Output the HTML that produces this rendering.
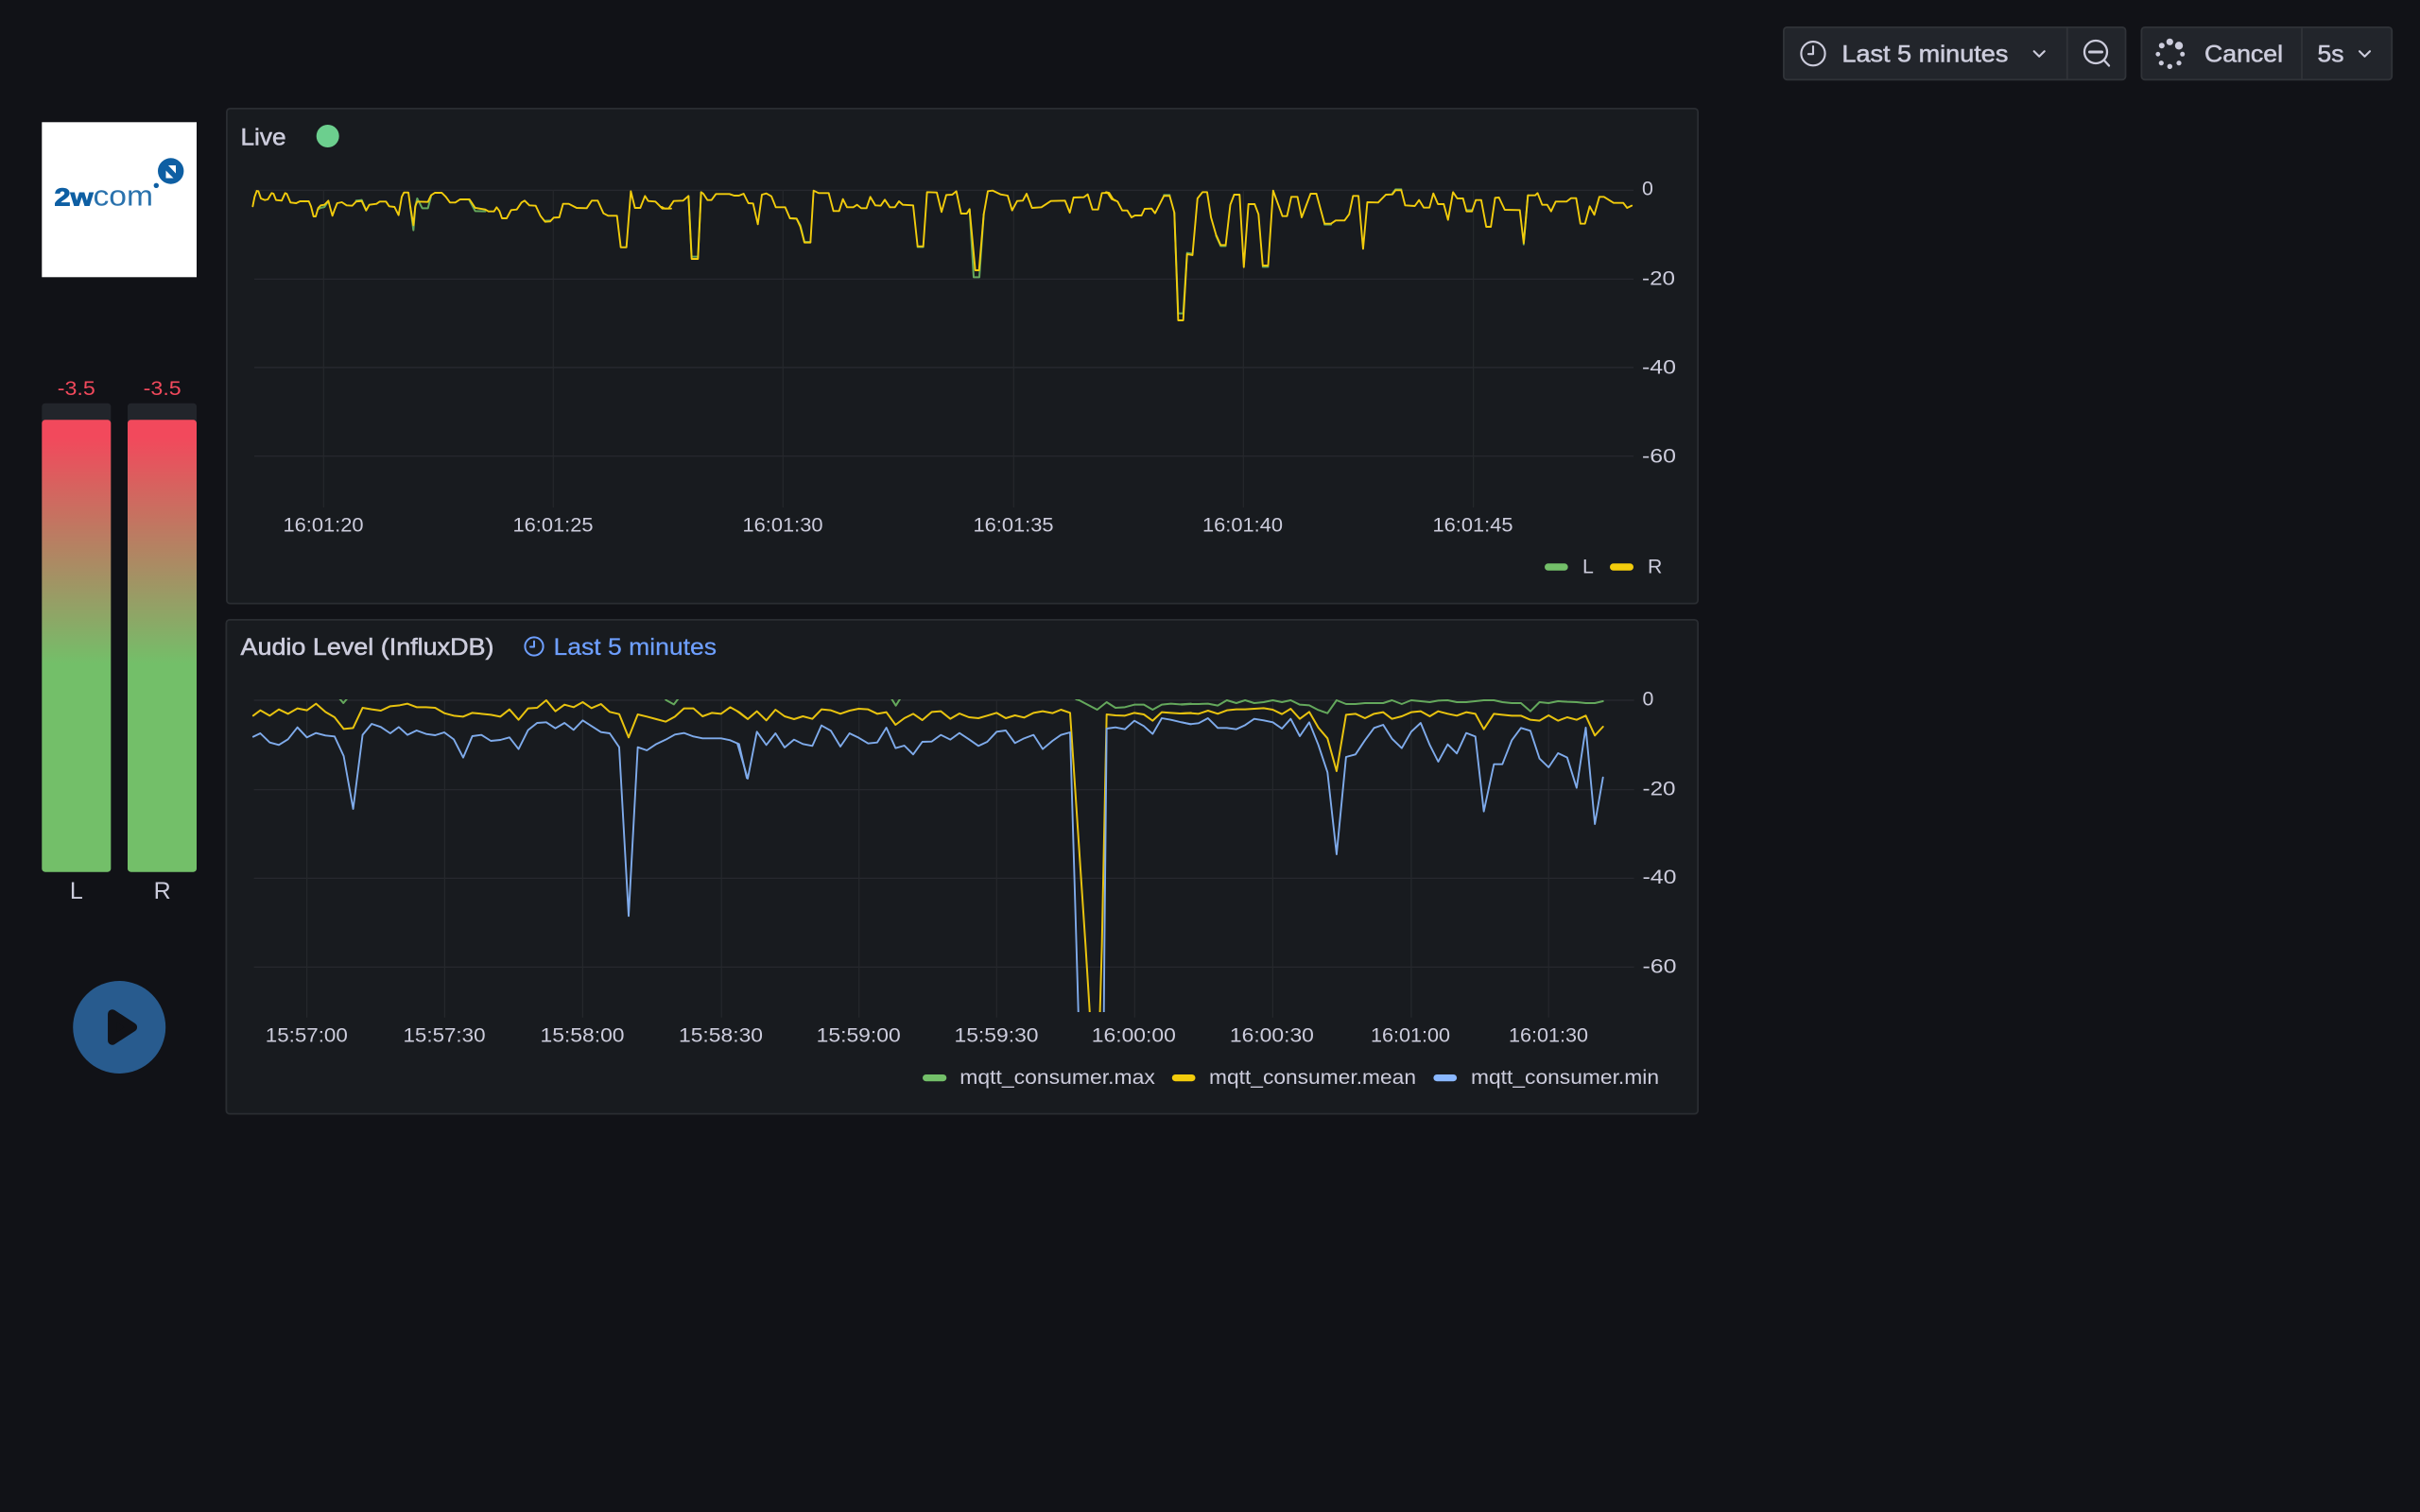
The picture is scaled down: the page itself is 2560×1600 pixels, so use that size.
<!DOCTYPE html>
<html lang="en">
<head>
<meta charset="utf-8">
<title>Audio Dashboard</title>
<style>
html,body{margin:0;padding:0;background:#111217;width:2560px;height:1600px;overflow:hidden}
svg{display:block}
text{font-family:"Liberation Sans",sans-serif;fill:#ccccdc;font-size:21.3px}
.m{font-size:25px;stroke:#ccccdc;stroke-width:.55px}
.c{text-anchor:middle}
.grid line{stroke:#25282c;stroke-width:1.2}
.grid line.h{stroke:#282b30}
polyline{fill:none;stroke-linejoin:round;stroke-linecap:round;vector-effect:non-scaling-stroke}
.g polyline{stroke:#64a85c;stroke-width:2}
.y polyline{stroke:#f2cc0c;stroke-width:1.9}
.b polyline{stroke:#7fabeb;stroke-width:1.9}
.y2 polyline{stroke:#e8c30f;stroke-width:2}
</style>
</head>
<body>
<svg xmlns="http://www.w3.org/2000/svg" width="2560" height="1600" viewBox="0 0 2560 1600">
<defs>
<linearGradient id="meter" x1="0" y1="0" x2="0" y2="1">
<stop offset="0.04" stop-color="#f2495c"/>
<stop offset="0.54" stop-color="#73bf69"/>
</linearGradient>
<clipPath id="clip2"><rect x="260" y="740" width="1480" height="331"/></clipPath>
</defs>

<!-- toolbar -->
<rect x="1886.9" y="28.9" width="361.6" height="55.4" rx="3.5" fill="#22252b" stroke="#303338" stroke-width="1.8"/>
<line x1="2186.8" y1="29" x2="2186.8" y2="84" stroke="#303338" stroke-width="1.8"/>
<rect x="2265.4" y="28.9" width="264.8" height="55.4" rx="3.5" fill="#22252b" stroke="#303338" stroke-width="1.8"/>
<line x1="2435" y1="29" x2="2435" y2="84" stroke="#303338" stroke-width="1.8"/>
<circle cx="1918" cy="56.7" r="12.6" fill="none" stroke="#ccccdc" stroke-width="2.1"/>
<path d="M1918 49v8.2h-5" fill="none" stroke="#ccccdc" stroke-width="2.1" stroke-linecap="round" stroke-linejoin="round"/>
<text class="m" x="1948.4" y="65.7" textLength="176" lengthAdjust="spacingAndGlyphs">Last 5 minutes</text>
<path d="M2151.7 54.2l5.5 5.5 5.5-5.5" fill="none" stroke="#ccccdc" stroke-width="2.1" stroke-linecap="round" stroke-linejoin="round"/>
<circle cx="2217" cy="55" r="12" fill="none" stroke="#ccccdc" stroke-width="2.3"/>
<path d="M2210.5 55h13" stroke="#ccccdc" stroke-width="3" stroke-linecap="round"/>
<path d="M2226 64l5 5.5" stroke="#ccccdc" stroke-width="2.3" stroke-linecap="round"/>
<g fill="#ccccdc">
<circle cx="2295.3" cy="44.3" r="3.6"/><circle cx="2305" cy="48.3" r="4.2"/><circle cx="2286.8" cy="48.3" r="3"/>
<circle cx="2308.7" cy="57.3" r="2.5"/><circle cx="2305" cy="66.7" r="2.6"/><circle cx="2295.3" cy="70.3" r="2.7"/>
<circle cx="2286.3" cy="66.7" r="2.6"/><circle cx="2282.8" cy="57.3" r="2.4"/>
</g>
<text class="m" x="2332" y="65.7" textLength="83" lengthAdjust="spacingAndGlyphs">Cancel</text>
<text class="m" x="2451.5" y="65.7" textLength="28" lengthAdjust="spacingAndGlyphs">5s</text>
<path d="M2496 54.2l5.5 5.5 5.5-5.5" fill="none" stroke="#ccccdc" stroke-width="2.1" stroke-linecap="round" stroke-linejoin="round"/>

<!-- logo -->
<rect x="44.3" y="129.3" width="163.7" height="164" fill="#ffffff"/>
<text x="57.5" y="217.3" textLength="41" lengthAdjust="spacingAndGlyphs" style="font-size:26px;font-weight:700;fill:#0e5fa3;stroke:#0e5fa3;stroke-width:.9px">2w</text>
<text x="98.5" y="217.3" textLength="63.5" lengthAdjust="spacingAndGlyphs" style="font-size:31px;fill:#2a72ad">com</text>
<circle cx="180.7" cy="181" r="13.7" fill="#0e5fa3"/>
<circle cx="165.3" cy="196.3" r="2.7" fill="#0e5fa3"/>
<path d="M178 175h8v8.5zM175.5 180.5l8 8h-8z" fill="#ffffff"/>

<!-- meters -->
<text class="c" x="80.8" y="418" textLength="40" lengthAdjust="spacingAndGlyphs" style="fill:#f2495c">-3.5</text>
<text class="c" x="171.7" y="418" textLength="40" lengthAdjust="spacingAndGlyphs" style="fill:#f2495c">-3.5</text>
<rect x="44.3" y="426.7" width="73" height="496" rx="3.5" fill="#22252b"/>
<rect x="135" y="426.7" width="73" height="496" rx="3.5" fill="#22252b"/>
<rect x="44.3" y="444.3" width="73" height="478.4" rx="3.5" fill="url(#meter)"/>
<rect x="135" y="444.3" width="73" height="478.4" rx="3.5" fill="url(#meter)"/>
<text class="c" x="80.8" y="951" style="font-size:25px">L</text>
<text class="c" x="171.7" y="951" style="font-size:25px">R</text>

<!-- play -->
<circle cx="126.2" cy="1087" r="49" fill="#285b8e"/>
<path d="M118.8 1073L140.3 1087L118.8 1101Z" fill="#111217" stroke="#111217" stroke-width="9.5" stroke-linejoin="round"/>

<!-- panel 1 -->
<rect x="239.9" y="114.9" width="1556.2" height="523.7" rx="3.5" fill="#181b1f" stroke="#2a2d32" stroke-width="1.8"/>
<text class="m" x="254.5" y="153.3" textLength="48" lengthAdjust="spacingAndGlyphs">Live</text>
<circle cx="346.7" cy="144" r="12" fill="#6ccf8e"/>
<g class="grid">
<line class="h" x1="269" y1="201.3" x2="1728" y2="201.3"/><line class="h" x1="269" y1="295.3" x2="1728" y2="295.3"/>
<line class="h" x1="269" y1="388.9" x2="1728" y2="388.9"/><line class="h" x1="269" y1="482.7" x2="1728" y2="482.7"/>
<line x1="342.3" y1="201" x2="342.3" y2="537"/><line x1="585.3" y1="201" x2="585.3" y2="537"/>
<line x1="828.3" y1="201" x2="828.3" y2="537"/><line x1="1072.3" y1="201" x2="1072.3" y2="537"/>
<line x1="1315.3" y1="201" x2="1315.3" y2="537"/><line x1="1558.6" y1="201" x2="1558.6" y2="537"/>
</g>
<text x="1737" y="206.7">0</text>
<text x="1737" y="301.7" textLength="35" lengthAdjust="spacingAndGlyphs">-20</text>
<text x="1737" y="395.7" textLength="36" lengthAdjust="spacingAndGlyphs">-40</text>
<text x="1737" y="489.7" textLength="36" lengthAdjust="spacingAndGlyphs">-60</text>
<text class="c" x="342" y="562.7" textLength="85" lengthAdjust="spacingAndGlyphs">16:01:20</text>
<text class="c" x="585" y="562.7" textLength="85" lengthAdjust="spacingAndGlyphs">16:01:25</text>
<text class="c" x="828" y="562.7" textLength="85" lengthAdjust="spacingAndGlyphs">16:01:30</text>
<text class="c" x="1072" y="562.7" textLength="85" lengthAdjust="spacingAndGlyphs">16:01:35</text>
<text class="c" x="1314.5" y="562.7" textLength="85" lengthAdjust="spacingAndGlyphs">16:01:40</text>
<text class="c" x="1558" y="562.7" textLength="85" lengthAdjust="spacingAndGlyphs">16:01:45</text>
<rect x="1634" y="596.3" width="24.7" height="7.4" rx="3.7" fill="#73bf69"/>
<text x="1674" y="606.7">L</text>
<rect x="1703" y="596.3" width="25" height="7.4" rx="3.7" fill="#f2cc0c"/>
<text x="1743" y="606.7">R</text>

<!-- chart 1 green -->
<g class="g">
<g transform="translate(230 105) scale(.33333)">
<polyline points="318,350 328,345 340,342 352,324"/>
<polyline points="612,340 622,416 628,340 634,315 650,346 668,346 678,308"/>
<polyline points="440,322 458,320 472,353"/>
<polyline points="800,322 818,355 850,356"/>
<polyline points="1040,386 1056,385"/>
</g>
<g transform="translate(700 170) scale(.33333)">
<polyline points="85,112 95,305 115,305 125,100"/>
<polyline points="977,154 990,370 1008,370 1022,170"/>
<polyline points="407,183 428,184 440,205 453,258 472,258"/>
<polyline points="812,274 830,274"/>
</g>
<g transform="translate(1170 170) scale(.40833 .33333)">
<polyline points="177,165 187,485 200,485 210,293 224,296"/>
<polyline points="285,238 297,271 310,271"/>
<polyline points="406,337 420,337"/>
<polyline points="1082,266 1093,110"/>
<polyline points="150,109 165,109"/>
<polyline points="742,104 750,91 765,91"/>
<polyline points="934,157 948,157"/>
<polyline points="566,203 583,203"/>
</g>
</g>
<!-- chart 1 yellow -->
<g class="y">
<g transform="translate(230 105) scale(.33333)">
<polyline points="112,340 118,310 125,291 130,292 138,315 150,320 160,318 172,298 178,300 186,320 204,322 215,298 220,300 232,328 250,330 262,324 290,324 297,340 305,372 312,372 320,345 328,337 340,335 352,322 358,345 365,370 372,350 380,330 395,327 410,337 428,338 440,325 458,323 472,353 482,335 505,332 515,325 535,325 545,340 562,342 575,368 585,310 592,296 606,296 612,340 622,400 628,340 634,325 668,326 678,305 690,297 712,297 725,310 738,328 755,328 770,318 800,318 818,345 850,350 860,356 878,356 886,343 895,355 903,378 918,378 932,352 950,350 965,328 975,322 990,337 1010,338 1025,370 1040,389 1056,388 1067,376 1085,375 1097,332 1115,332 1140,345 1172,346 1188,322 1207,322 1225,362 1240,370 1268,370 1280,470 1298,470 1312,292 1325,345 1342,345 1357,307 1367,323 1390,325 1412,347 1440,347"/>
</g>
<g transform="translate(700 170) scale(.33333)">
<polyline points="0,147 10,152 22,152 38,128 68,127 85,112 95,312 115,312 125,100 132,105 145,125 158,125 172,106 215,106 230,111 245,111 260,105 275,135 290,136 305,202 318,108 332,104 348,113 362,148 392,148 407,183 428,184 440,210 453,260 472,260 482,95 498,103 530,103 545,160 563,160 575,122 588,148 608,148 620,140 633,151 650,151 662,115 678,142 695,143 708,124 724,148 740,148 753,129 765,140 798,142 812,272 830,272 842,100 873,101 888,163 903,109 922,108 935,97 950,168 968,168 977,154 995,348 1007,348 1022,170 1035,97 1050,95 1075,107 1098,111 1112,158 1128,128 1146,127 1158,105 1175,150 1205,148 1235,128 1280,127 1295,165 1307,117 1340,116 1352,107 1367,155 1385,155 1397,103 1415,102 1428,122 1440,127"/>
</g>
<g transform="translate(1170 170) scale(.40833 .33333)">
<polyline points="0,100 8,102 18,122 30,130 42,158 55,158 66,180 75,174 92,174 100,153 118,152 127,167 150,112 165,112 177,165 187,507 200,507 210,297 224,300 237,120 250,100 262,100 272,180 285,235 297,268 310,268 322,140 332,108 346,108 357,338 369,138 385,138 395,170 406,333 420,333 433,95 457,176 469,176 480,115 496,115 507,180 530,105 545,105 566,200 583,200 595,190 618,190 630,170 640,112 654,112 666,280 677,132 705,133 725,108 742,107 750,94 765,94 775,142 800,144 811,125 823,149 838,149 848,104 860,138 875,138 886,188 899,100 910,120 925,120 934,161 948,161 958,125 972,125 985,210 997,210 1008,118 1018,117 1033,156 1072,157 1082,262 1093,110 1112,110 1118,103 1130,140 1143,140 1153,161 1165,130 1193,130 1205,119 1218,119 1229,200 1241,200 1253,145 1265,172 1278,115 1290,115 1315,134 1340,134 1350,150 1362,143"/>
</g>
</g>

<!-- panel 2 -->
<rect x="239.4" y="655.9" width="1556.7" height="522.7" rx="3.5" fill="#181b1f" stroke="#2a2d32" stroke-width="1.8"/>
<text class="m" x="254.5" y="693" textLength="268" lengthAdjust="spacingAndGlyphs">Audio Level (InfluxDB)</text>
<circle cx="565" cy="684" r="9.6" fill="none" stroke="#6e9fff" stroke-width="2"/>
<path d="M565 678.5v6h-4" fill="none" stroke="#6e9fff" stroke-width="2" stroke-linecap="round" stroke-linejoin="round"/>
<text x="585.5" y="693" textLength="172.5" lengthAdjust="spacingAndGlyphs" style="font-size:25px;fill:#6e9fff;stroke:#6e9fff;stroke-width:.25px">Last 5 minutes</text>
<g class="grid">
<line class="h" x1="268.6" y1="741" x2="1728.6" y2="741"/><line class="h" x1="268.6" y1="835.7" x2="1728.6" y2="835.7"/>
<line class="h" x1="268.6" y1="929.3" x2="1728.6" y2="929.3"/><line class="h" x1="268.6" y1="1023.3" x2="1728.6" y2="1023.3"/>
<line x1="324.6" y1="741" x2="324.6" y2="1076.7"/><line x1="470.4" y1="741" x2="470.4" y2="1076.7"/>
<line x1="616.4" y1="741" x2="616.4" y2="1076.7"/><line x1="763.2" y1="741" x2="763.2" y2="1076.7"/>
<line x1="908.7" y1="741" x2="908.7" y2="1076.7"/><line x1="1054.3" y1="741" x2="1054.3" y2="1076.7"/>
<line x1="1200.3" y1="741" x2="1200.3" y2="1076.7"/><line x1="1346.4" y1="741" x2="1346.4" y2="1076.7"/>
<line x1="1492.9" y1="741" x2="1492.9" y2="1076.7"/><line x1="1638.2" y1="741" x2="1638.2" y2="1076.7"/>
</g>
<text x="1737.5" y="746.7">0</text>
<text x="1737.5" y="841.7" textLength="35" lengthAdjust="spacingAndGlyphs">-20</text>
<text x="1737.5" y="935" textLength="36" lengthAdjust="spacingAndGlyphs">-40</text>
<text x="1737.5" y="1029.3" textLength="36" lengthAdjust="spacingAndGlyphs">-60</text>
<text class="c" x="324.3" y="1102.7" textLength="87" lengthAdjust="spacingAndGlyphs">15:57:00</text>
<text class="c" x="470" y="1102.7" textLength="87" lengthAdjust="spacingAndGlyphs">15:57:30</text>
<text class="c" x="616" y="1102.7" textLength="89" lengthAdjust="spacingAndGlyphs">15:58:00</text>
<text class="c" x="762.5" y="1102.7" textLength="89" lengthAdjust="spacingAndGlyphs">15:58:30</text>
<text class="c" x="908.2" y="1102.7" textLength="89" lengthAdjust="spacingAndGlyphs">15:59:00</text>
<text class="c" x="1054" y="1102.7" textLength="89" lengthAdjust="spacingAndGlyphs">15:59:30</text>
<text class="c" x="1199.3" y="1102.7" textLength="89" lengthAdjust="spacingAndGlyphs">16:00:00</text>
<text class="c" x="1345.4" y="1102.7" textLength="89" lengthAdjust="spacingAndGlyphs">16:00:30</text>
<text class="c" x="1492" y="1102.7" textLength="84" lengthAdjust="spacingAndGlyphs">16:01:00</text>
<text class="c" x="1638" y="1102.7" textLength="84" lengthAdjust="spacingAndGlyphs">16:01:30</text>
<rect x="976" y="1137" width="25.3" height="7.2" rx="3.6" fill="#73bf69"/>
<text x="1015.3" y="1147" textLength="206.5" lengthAdjust="spacingAndGlyphs">mqtt_consumer.max</text>
<rect x="1239.8" y="1137" width="24.7" height="7.2" rx="3.6" fill="#f2cc0c"/>
<text x="1279" y="1147" textLength="219" lengthAdjust="spacingAndGlyphs">mqtt_consumer.mean</text>
<rect x="1516.4" y="1137" width="24.7" height="7.2" rx="3.6" fill="#8ab8ff"/>
<text x="1556" y="1147" textLength="199" lengthAdjust="spacingAndGlyphs">mqtt_consumer.min</text>

<g clip-path="url(#clip2)">
<g class="g">
<g transform="translate(230 650) scale(.35714 .33333)">
<polyline points="362,268 373,282 384,268"/>
<polyline points="1328,272 1352,286 1365,268"/>
</g>
<g transform="translate(780 720) scale(.33333)">
<polyline points="488,56 503,80 518,56"/>
<polyline points="1075,60 1085,63 1142,93 1172,69 1200,87 1230,85 1260,77 1290,77 1318,93 1347,77 1376,74 1405,76 1440,74"/>
</g>
<g transform="translate(1250 720) scale(.35714 .33333)">
<polyline points="0,77 25,75 50,75 78,74 107,80 134,63 162,72 188,63 215,72 243,69 270,63 297,69 323,63 350,77 378,79 405,94 432,104 459,63 487,75 515,75 543,72 570,72 597,72 623,63 652,75 680,63 708,66 735,69 760,64 788,63 815,69 843,69 870,66 895,63 925,63 950,69 978,72 1005,72 1033,98 1060,69 1087,72 1115,66 1142,68 1170,69 1197,72 1224,72 1248,66"/>
</g>
</g>
<g class="y2">
<g transform="translate(230 650) scale(.35714 .33333)">
<polyline points="106,322 127,305 155,322 182,302 209,316 237,299 265,305 292,284 320,310 347,327 374,364 402,361 430,297 457,302 484,306 512,292 540,289 563,284 590,295 618,295 645,297 672,314 700,322 728,325 755,313 782,316 810,319 838,325 865,302 892,335 920,299 947,297 974,273 1001,308 1028,287 1055,295 1082,279 1108,298 1136,285 1162,310 1190,317 1218,391 1245,318 1272,325 1300,333 1328,341 1355,325 1382,299 1410,299 1437,324 1465,313 1492,316 1519,295 1547,312 1568,330"/>
</g>
<g transform="translate(780 720) scale(.33333)">
<polyline points="0,98 33,123 62,98 92,127 121,93 150,114 180,123 208,114 238,122 267,92 297,95 327,106 356,96 385,90 415,92 444,106 473,101 502,141 530,120 558,106 587,126 617,100 646,98 676,122 705,105 735,117 765,120 793,112 823,103 852,120 881,111 910,118 940,103 969,98 1000,104 1027,93 1056,103 1105,840 1120,1080"/>
<polyline points="1150,1080 1157,840 1172,108 1200,111 1230,112 1260,103 1290,108 1318,128 1347,101 1376,103 1405,105 1440,103"/>
</g>
<g transform="translate(1250 720) scale(.35714 .33333)">
<polyline points="0,105 25,104 50,106 78,96 107,106 134,95 162,92 188,92 215,90 243,88 270,93 297,107 323,90 350,122 378,100 405,150 432,184 459,288 487,109 515,106 543,120 570,106 597,101 623,122 652,114 680,101 708,98 735,114 760,98 788,106 815,112 843,101 870,106 895,155 925,106 950,109 978,112 1005,112 1033,125 1060,128 1087,111 1115,128 1142,117 1170,125 1197,112 1224,175 1248,147"/>
</g>
</g>
<g class="b">
<g transform="translate(230 650) scale(.35714 .33333)">
<polyline points="106,389 127,378 155,407 182,415 209,397 237,359 265,391 292,377 320,385 347,388 374,450 402,618 430,383 457,348 484,358 512,378 537,358 563,383 590,369 618,380 645,384 672,375 700,397 728,455 755,387 782,383 810,402 838,399 865,391 892,428 920,368 947,345 974,343 1001,362 1028,345 1055,367 1082,337 1108,355 1136,374 1162,378 1190,422 1218,958 1245,422 1272,432 1300,412 1328,398 1355,382 1382,377 1410,388 1437,394 1465,394 1492,394 1519,400 1545,412 1568,520"/>
</g>
<g transform="translate(780 720) scale(.33333)">
<polyline points="0,200 33,312 62,163 92,205 121,168 150,213 180,188 208,202 238,208 267,143 297,160 327,210 356,168 385,182 415,200 444,197 473,150 502,215 530,207 558,235 587,195 617,194 646,173 676,188 705,167 735,187 765,208 793,195 823,163 852,159 881,199 910,184 940,173 969,218 1000,192 1027,173 1056,165 1076,840 1083,1080"/>
<polyline points="1163,1080 1165,840 1172,153 1200,149 1230,155 1260,128 1290,145 1318,170 1347,120 1376,125 1405,132 1440,139"/>
</g>
<g transform="translate(1250 720) scale(.35714 .33333)">
<polyline points="0,133 25,139 50,136 78,120 107,151 134,151 162,155 188,142 215,122 243,127 270,133 297,153 323,122 350,177 378,133 405,205 432,292 459,552 487,243 515,235 543,190 570,151 597,141 623,185 652,215 680,163 708,135 735,205 760,258 788,203 815,232 843,167 870,178 895,416 925,266 950,266 978,190 1005,151 1033,160 1060,248 1087,276 1115,231 1142,245 1170,341 1197,150 1224,456 1248,308"/>
</g>
</g>
</g>
</svg>
</body>
</html>
